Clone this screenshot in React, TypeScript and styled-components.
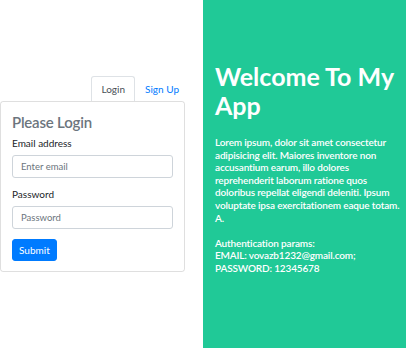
import React from 'react'
import styled, { createGlobalStyle } from 'styled-components'

const GlobalStyle = createGlobalStyle`
  html, body {
    margin: 0;
    padding: 0;
    height: 100%;
  }
  body {
    font-family: Lato, 'Open Sans', sans-serif;
    color: #212529;
    background: #fff;
  }
  #root {
    height: 100%;
  }
`

const Page = styled.div`
  display: flex;
  height: 100vh;
`

const LeftSide = styled.div`
  flex: 0 0 50%;
  min-width: 0;
  display: flex;
  align-items: center;
`

const AuthBox = styled.div`
  width: 185px;
`

const Tabs = styled.ul`
  display: flex;
  justify-content: flex-end;
  list-style: none;
  margin: 0 -4px 0 0;
  padding: 0;
`

const Tab = styled.li<{ $active?: boolean }>`
  padding: 0 9px;
  height: 24px;
  display: flex;
  align-items: center;
  font-size: 10px;
  color: ${(p) => (p.$active ? '#495057' : '#007bff')};
  border: 1px solid ${(p) => (p.$active ? '#dee2e6' : 'transparent')};
  border-bottom: none;
  border-radius: 3px 3px 0 0;
  background: ${(p) => (p.$active ? '#fff' : 'transparent')};
  cursor: pointer;
`

const Card = styled.form`
  border: 1px solid rgba(0, 0, 0, 0.125);
  border-radius: 3px;
  padding: 11px 11px 10px;
`

const CardTitle = styled.h4`
  margin: 0 0 5px;
  font-size: 15px;
  font-weight: 600;
  letter-spacing: -0.2px;
  color: #6c757d;
  line-height: 18px;
`

const Field = styled.div`
  margin-bottom: 9px;
`

const Label = styled.label`
  display: block;
  font-size: 10px;
  margin-bottom: 4px;
  line-height: 15px;
`

const Input = styled.input`
  display: block;
  box-sizing: border-box;
  width: 100%;
  height: 23px;
  padding: 0 8px;
  font-family: inherit;
  font-size: 9.5px;
  border: 1px solid #ced4da;
  border-radius: 3px;
  color: #495057;
  &::placeholder {
    color: #6c757d;
  }
`

const SubmitButton = styled.button`
  height: 22px;
  padding: 0 6px;
  font-family: inherit;
  font-size: 10px;
  color: #fff;
  background: #007bff;
  border: 1px solid #007bff;
  border-radius: 3px;
  cursor: pointer;
`

const RightSide = styled.div`
  flex: 0 0 50%;
  min-width: 0;
  box-sizing: border-box;
  background: #20c997;
  color: #fff;
  padding: 62px 3px 0 12px;
`

const Title = styled.h1`
  margin: 0 0 16px;
  font-size: 25px;
  font-weight: 700;
  line-height: 29px;
`

const Text = styled.p`
  margin: 0;
  font-size: 10px;
  font-weight: 600;
  letter-spacing: -0.15px;
  line-height: 12.6px;
`

export default function App() {
  return (
    <>
      <GlobalStyle />
      <Page>
        <LeftSide>
          <AuthBox>
            <Tabs>
              <Tab $active>Login</Tab>
              <Tab>Sign Up</Tab>
            </Tabs>
            <Card onSubmit={(e) => e.preventDefault()}>
              <CardTitle>Please Login</CardTitle>
              <Field>
                <Label>Email address</Label>
                <Input type="email" placeholder="Enter email" />
              </Field>
              <Field>
                <Label>Password</Label>
                <Input type="password" placeholder="Password" />
              </Field>
              <SubmitButton type="submit">Submit</SubmitButton>
            </Card>
          </AuthBox>
        </LeftSide>
        <RightSide>
          <Title>Welcome To My App</Title>
          <Text>
            Lorem ipsum, dolor sit amet consectetur adipisicing elit. Maiores inventore non
            accusantium earum, illo dolores reprehenderit laborum ratione quos doloribus repellat
            eligendi deleniti. Ipsum voluptate ipsa exercitationem eaque totam. A.
            <br />
            <br />
            Authentication params:
            <br />
            EMAIL: vovazb1232@gmail.com;
            <br />
            PASSWORD: 12345678
          </Text>
        </RightSide>
      </Page>
    </>
  )
}
